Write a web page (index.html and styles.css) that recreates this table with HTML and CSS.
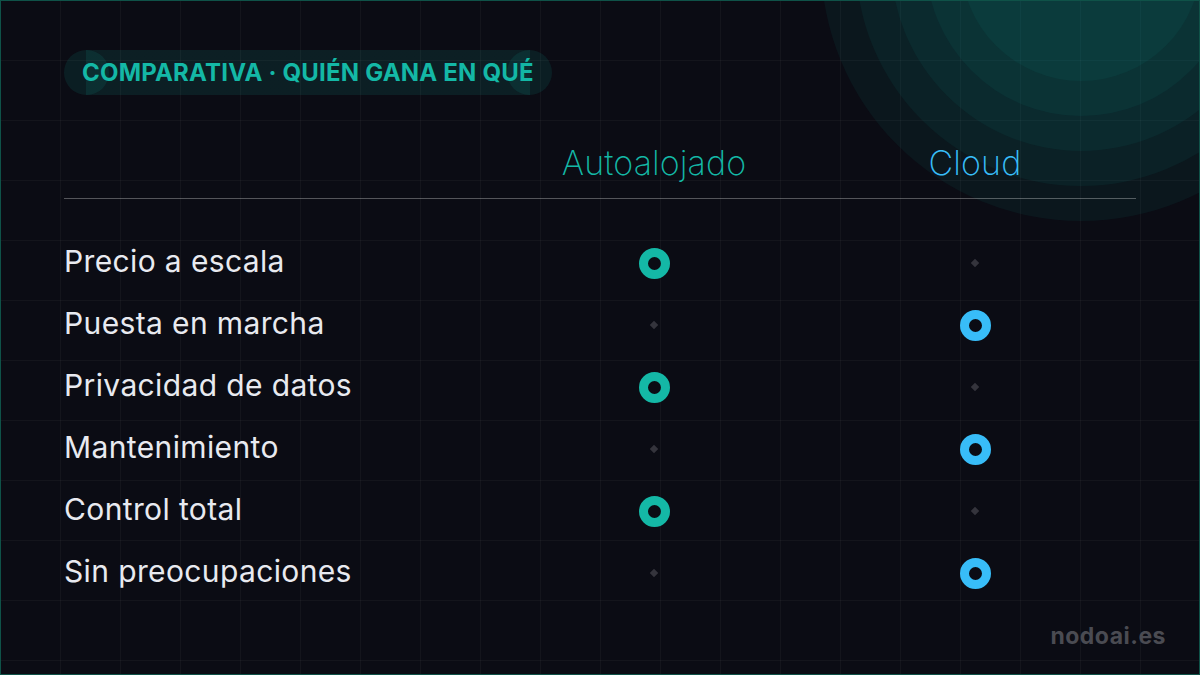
FILE: index.html
```html
<!DOCTYPE html>
<html lang="es">
<head>
  <meta charset="UTF-8" />
  <title>Comparativa · Autoalojado vs Cloud</title>
  <link rel="stylesheet" href="styles.css">
</head>
<body>
  <div class="slide">
    <!-- decorative rings top right -->
    <div class="halo">
      <span class="ring r1"></span>
      <span class="ring r2"></span>
      <span class="ring r3"></span>
      <span class="ring r4"></span>
      <span class="ring r5"></span>
    </div>

    <div class="badge"><span class="badge-text">COMPARATIVA · QUIÉN GANA EN QUÉ</span></div>

    <div class="table">
      <div class="head">
        <div></div>
        <div class="col-title self">Autoalojado</div>
        <div class="col-title cloud">Cloud</div>
      </div>

      <div class="row">
        <div class="label">Precio a escala</div>
        <div class="cell"><span class="mark self"></span></div>
        <div class="cell"><span class="dot"></span></div>
      </div>
      <div class="row">
        <div class="label">Puesta en marcha</div>
        <div class="cell"><span class="dot"></span></div>
        <div class="cell"><span class="mark cloud"></span></div>
      </div>
      <div class="row">
        <div class="label">Privacidad de datos</div>
        <div class="cell"><span class="mark self"></span></div>
        <div class="cell"><span class="dot"></span></div>
      </div>
      <div class="row">
        <div class="label">Mantenimiento</div>
        <div class="cell"><span class="dot"></span></div>
        <div class="cell"><span class="mark cloud"></span></div>
      </div>
      <div class="row">
        <div class="label">Control total</div>
        <div class="cell"><span class="mark self"></span></div>
        <div class="cell"><span class="dot"></span></div>
      </div>
      <div class="row">
        <div class="label">Sin preocupaciones</div>
        <div class="cell"><span class="dot"></span></div>
        <div class="cell"><span class="mark cloud"></span></div>
      </div>
    </div>

    <div class="brand">nodoai.es</div>
  </div>
</body>
</html>
```

FILE: styles.css
```css
* {
  box-sizing: border-box;
}

body {
  margin: 0;
  padding: 0;
  background: #0b0c14;
  font-family: Inter, "Noto Sans", sans-serif;
}

.slide {
  position: relative;
  width: 1200px;
  height: 675px;
  overflow: hidden;
  border: 1px solid #0f5248;
  background-color: #0b0c14;
  background-image:
    linear-gradient(rgba(255, 255, 255, 0.035) 1px, transparent 1px),
    linear-gradient(90deg, rgba(255, 255, 255, 0.035) 1px, transparent 1px);
  background-size: 60px 60px;
  background-position: -1px -1px;
  padding: 49px 63px 0 63px;
  display: flex;
  flex-direction: column;
}

/* decorative rings */
.halo {
  position: absolute;
  left: 1080px;
  top: -40px;
  width: 0;
  height: 0;
}

.ring {
  position: absolute;
  border-radius: 50%;
  background: rgba(20, 184, 166, 0.065);
}

.r1 { width: 520px; height: 520px; left: -260px; top: -260px; }
.r2 { width: 450px; height: 450px; left: -225px; top: -225px; }
.r3 { width: 380px; height: 380px; left: -190px; top: -190px; }
.r4 { width: 310px; height: 310px; left: -155px; top: -155px; }
.r5 { width: 240px; height: 240px; left: -120px; top: -120px; }

/* pill: a band between two round caps that overlap it */
.badge {
  position: relative;
  align-self: flex-start;
  height: 45px;
  padding: 0 18px;
  white-space: nowrap;
}

.badge::before,
.badge::after {
  content: "";
  position: absolute;
  top: 0;
  width: 45px;
  height: 45px;
  border-radius: 50%;
  background: rgba(20, 184, 166, 0.11);
}

.badge::before { left: 0; }
.badge::after { right: 0; }

.badge-text {
  position: relative;
  display: block;
  line-height: 45px;
  margin: 0 -18px;
  padding: 0 18px;
  background: linear-gradient(rgba(20, 184, 166, 0.11), rgba(20, 184, 166, 0.11)) no-repeat 22px 0 / calc(100% - 44px) 100%;
  color: #14b8a6;
  font-size: 24px;
  font-weight: 700;
  letter-spacing: 0.2px;
}

.table {
  position: relative;
  margin-top: 44px;
}

.head,
.row {
  display: grid;
  grid-template-columns: 431px 318px 324px;
  align-items: center;
}

.head {
  height: 60px;
  border-bottom: 1px solid rgba(255, 255, 255, 0.3);
  padding-bottom: 12px;
  margin-bottom: 33px;
}

.col-title {
  text-align: center;
  font-size: 34px;
  font-weight: 200;
  letter-spacing: 0.1px;
}

.col-title.self { color: #14b8a6; }
.col-title.cloud { color: #38bdf8; }

.row {
  height: 62px;
}

.label {
  color: #e8eaf0;
  font-size: 30px;
  font-weight: 400;
  letter-spacing: 0.37px;
  margin-top: -4px;
}

.cell {
  display: flex;
  justify-content: center;
  align-items: center;
}

.mark {
  width: 31px;
  height: 31px;
  border-radius: 50%;
  border: 9px solid #14b8a6;
}

.mark.cloud {
  border-color: #38bdf8;
}

.dot {
  width: 6px;
  height: 6px;
  background: #34343c;
  transform: rotate(45deg);
}

.brand {
  position: absolute;
  right: 33px;
  bottom: 24px;
  color: #4a4b52;
  font-size: 23px;
  font-weight: 700;
  letter-spacing: 0.5px;
}
```
